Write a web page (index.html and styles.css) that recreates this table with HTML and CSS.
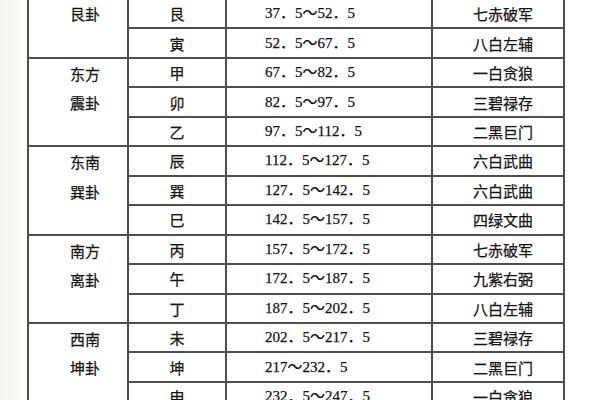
FILE: index.html
```html
<!DOCTYPE html>
<html lang="zh-CN">
<head>
<meta charset="utf-8">
<title>二十四山</title>
<link rel="stylesheet" href="styles.css">
</head>
<body>
<div class="page">
  <table class="grid">
    <colgroup>
      <col class="c-gua">
      <col class="c-shan">
      <col class="c-deg">
      <col class="c-star">
    </colgroup>
    <tbody>
      <tr><td class="gua open" rowspan="2">艮卦</td><td class="shan">艮</td><td class="deg">37．5～52．5</td><td class="star">七赤破军</td></tr>
      <tr><td class="shan">寅</td><td class="deg">52．5～67．5</td><td class="star">八白左辅</td></tr>

      <tr><td class="gua" rowspan="3">东方<br>震卦</td><td class="shan">甲</td><td class="deg">67．5～82．5</td><td class="star">一白贪狼</td></tr>
      <tr><td class="shan">卯</td><td class="deg">82．5～97．5</td><td class="star">三碧禄存</td></tr>
      <tr><td class="shan">乙</td><td class="deg">97．5～112．5</td><td class="star">二黑巨门</td></tr>

      <tr><td class="gua" rowspan="3">东南<br>巽卦</td><td class="shan">辰</td><td class="deg">112．5～127．5</td><td class="star">六白武曲</td></tr>
      <tr><td class="shan">巽</td><td class="deg">127．5～142．5</td><td class="star">六白武曲</td></tr>
      <tr><td class="shan">巳</td><td class="deg">142．5～157．5</td><td class="star">四绿文曲</td></tr>

      <tr><td class="gua" rowspan="3">南方<br>离卦</td><td class="shan">丙</td><td class="deg">157．5～172．5</td><td class="star">七赤破军</td></tr>
      <tr><td class="shan">午</td><td class="deg">172．5～187．5</td><td class="star">九紫右弼</td></tr>
      <tr><td class="shan">丁</td><td class="deg">187．5～202．5</td><td class="star">八白左辅</td></tr>

      <tr><td class="gua" rowspan="3">西南<br>坤卦</td><td class="shan">未</td><td class="deg">202．5～217．5</td><td class="star">三碧禄存</td></tr>
      <tr><td class="shan">坤</td><td class="deg">217～232．5</td><td class="star">二黑巨门</td></tr>
      <tr><td class="shan">申</td><td class="deg">232．5～247．5</td><td class="star">一白贪狼</td></tr>
    </tbody>
  </table>
</div>
</body>
</html>
```

FILE: styles.css
```css
html, body {
  margin: 0;
  padding: 0;
}

body {
  width: 600px;
  height: 400px;
  overflow: hidden;
  background: linear-gradient(to right, #f8f5ef 0, #fbf9f5 18px, #ffffff 24px);
  font-family: "Noto Sans CJK SC", "Noto Sans CJK TC", sans-serif;
  font-size: 15px;
  color: #141414;
  -webkit-text-stroke: 0.25px #141414;
}

.page {
  padding-left: 27px;
  margin-top: -2px;
}

.grid {
  border-collapse: collapse;
  table-layout: fixed;
  width: 536px;
  background: #ffffff;
}

.c-gua { width: 100px; }
.c-shan { width: 98px; }
.c-deg { width: 206px; }
.c-star { width: 132px; }

.grid td {
  border: 2px solid #4e4e4e;
  height: 29.46px;
  padding: 0;
  box-sizing: border-box;
  line-height: 27px;
  white-space: nowrap;
}

.grid td.open {
  border-top: none;
}

.gua {
  vertical-align: top;
  text-align: center;
  padding-left: 14px !important;
  line-height: 29.46px !important;
}

.shan {
  text-align: center;
}

.deg {
  text-align: left;
  padding-left: 38px !important;
  font-family: "Liberation Serif", "Noto Sans CJK SC", serif;
}

.star {
  text-align: center;
  padding-left: 10px !important;
}
```
